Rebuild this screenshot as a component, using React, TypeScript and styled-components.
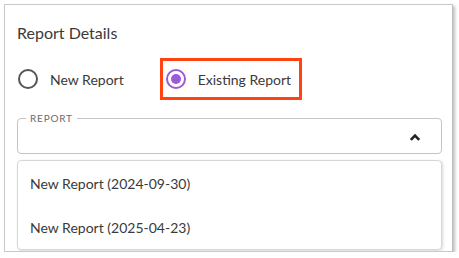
import React from "react";
import styled, { createGlobalStyle } from "styled-components";

const Global = createGlobalStyle`
  html, body { margin: 0; padding: 0; background: #ffffff; }
  body { font-family: Lato, "Open Sans", sans-serif; color: #333; }
`;

const Card = styled.div`
  box-sizing: border-box;
  margin: 4px 0 0 4px;
  width: 449px;
  height: 248px;
  border: 1px solid #c9c9c9;
  border-right-color: #bdbdbd;
  background: #fff;
  box-shadow: 2px 2px 3px rgba(0, 0, 0, 0.25);
  padding: 19px 0 0 12px;
  display: flex;
  flex-direction: column;
  overflow: hidden;
`;

const Title = styled.div`
  font-size: 16px;
  line-height: 18px;
  color: #3a3a3a;
  margin-bottom: 16px;
`;

const RadioRow = styled.div`
  display: flex;
  align-items: center;
  height: 42px;
  flex-shrink: 0;
`;

const RadioOption = styled.label<{ $highlight?: boolean }>`
  box-sizing: border-box;
  display: flex;
  align-items: center;
  gap: 12px;
  height: 42px;
  padding: 0 ${(p) => (p.$highlight ? 8 : 0)}px 0 ${(p) => (p.$highlight ? 3 : 1)}px;
  border: ${(p) => (p.$highlight ? "3px solid #ff4411" : "none")};
  font-size: 14px;
  color: #3a3a3a;
  margin-left: ${(p) => (p.$highlight ? 36 : 0)}px;
`;

const Circle = styled.span<{ $checked?: boolean }>`
  box-sizing: border-box;
  width: 20px;
  height: 20px;
  border-radius: 50%;
  border: 2px solid ${(p) => (p.$checked ? "#9c5ad8" : "#555")};
  display: flex;
  align-items: center;
  justify-content: center;
  &::after {
    content: "";
    display: ${(p) => (p.$checked ? "block" : "none")};
    width: 10px;
    height: 10px;
    border-radius: 50%;
    background: #9c5ad8;
  }
`;

const Field = styled.fieldset`
  box-sizing: border-box;
  margin: 13px 0 0 0;
  width: 425px;
  height: 41px;
  flex-shrink: 0;
  border: 1px solid #c4c4c4;
  border-radius: 4px;
  padding: 0 20px 0 8px;
`;

const FieldBody = styled.div`
  height: 30px;
  display: flex;
  align-items: center;
  justify-content: flex-end;
`;

const Legend = styled.legend`
  font-size: 10px;
  letter-spacing: 0.8px;
  color: #6b6b6b;
  padding: 0 4px;
  line-height: 10px;
`;

const Menu = styled.div`
  box-sizing: border-box;
  margin-top: 6px;
  width: 425px;
  height: 90px;
  flex-shrink: 0;
  border: 1px solid #d6d6d6;
  border-radius: 4px;
  box-shadow: 1px 1px 3px rgba(0, 0, 0, 0.15);
  display: flex;
  flex-direction: column;
  padding-top: 1px;
`;

const Item = styled.div`
  height: 44px;
  display: flex;
  align-items: center;
  padding-left: 12px;
  font-size: 14px;
  color: #3a3a3a;
`;

const ChevronIcon = styled.svg`
  margin-top: -2px;
`;

const Chevron = () => (
  <ChevronIcon width="12" height="8" viewBox="0 0 12 8">
    <path d="M1.8 6.8 L6 2.6 L10.2 6.8" fill="none" stroke="#222" strokeWidth="2.6" />
  </ChevronIcon>
);

export default function App() {
  return (
    <>
      <Global />
      <Card>
        <Title>Report Details</Title>
        <RadioRow>
          <RadioOption>
            <Circle />
            New Report
          </RadioOption>
          <RadioOption $highlight>
            <Circle $checked />
            Existing Report
          </RadioOption>
        </RadioRow>
        <Field>
          <Legend>REPORT</Legend>
          <FieldBody>
            <Chevron />
          </FieldBody>
        </Field>
        <Menu>
          <Item>New Report (2024-09-30)</Item>
          <Item>New Report (2025-04-23)</Item>
        </Menu>
      </Card>
    </>
  );
}
